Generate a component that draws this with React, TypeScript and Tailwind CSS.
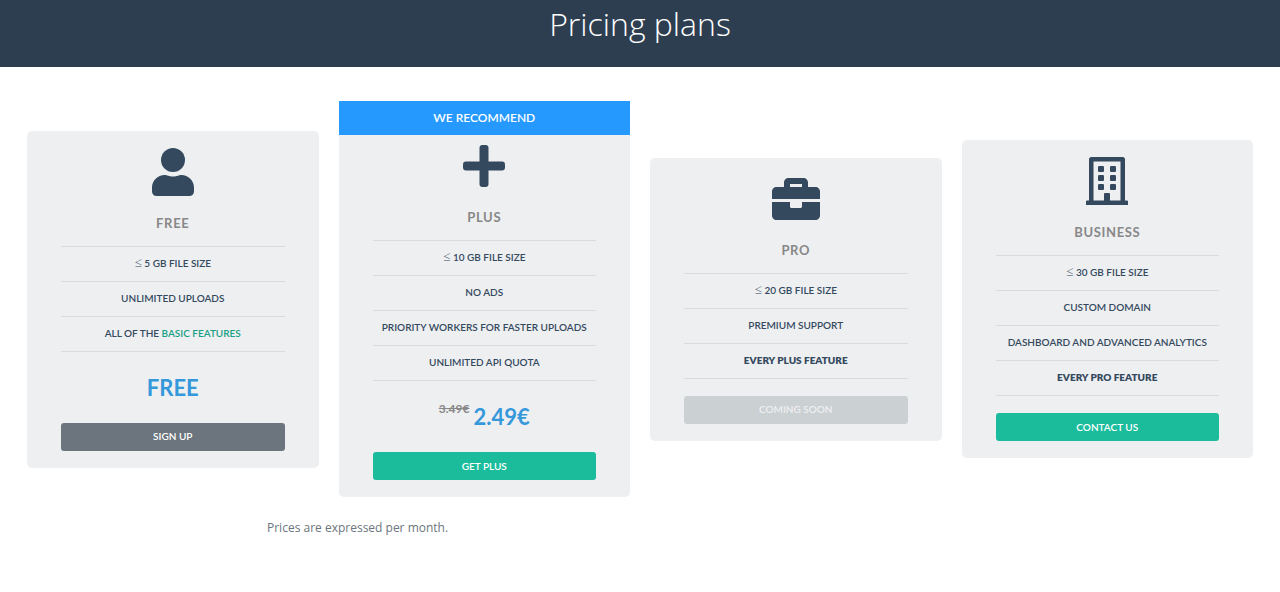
import type { ReactNode } from 'react';
import clsx from 'clsx';

interface Plan {
    name: string;
    icon: ReactNode;
    features: ReactNode[];
    recommended?: boolean;
    oldPrice?: string;
    price?: string;
    action: string;
    actionStyle: string;
    disabled?: boolean;
}

function UserIcon() {
    return (
        <svg viewBox="0 0 448 512" className="h-12" fill="currentColor" aria-hidden="true">
            <circle cx="224" cy="128" r="128" />
            <path d="M313.600 288c-28.700 0-42.500 16-89.600 16s-60.800-16-89.600-16C60.200 288 0 348.200 0 422.400V464c0 26.500 21.500 48 48 48h352c26.500 0 48-21.500 48-48v-41.600c0-74.200-60.200-134.400-134.400-134.400z" />
        </svg>
    );
}

function PlusIcon() {
    return (
        <svg viewBox="0 0 448 512" className="h-12" fill="currentColor" aria-hidden="true">
            <rect x="176" y="32" width="96" height="448" rx="32" />
            <rect x="0" y="208" width="448" height="96" rx="32" />
        </svg>
    );
}

function BriefcaseIcon() {
    return (
        <svg viewBox="0 0 512 512" className="h-12" fill="currentColor" aria-hidden="true">
            <path d="M320 336c0 8.840-7.160 16-16 16h-96c-8.840 0-16-7.160-16-16v-48H0v144c0 25.600 22.400 48 48 48h416c25.600 0 48-22.400 48-48V288H320v48zm144-208h-80V80c0-25.600-22.400-48-48-48H176c-25.600 0-48 22.400-48 48v48H48c-25.600 0-48 22.400-48 48v80h512v-80c0-25.600-22.400-48-48-48zm-144 0H192V96h128v32z" />
        </svg>
    );
}

function BuildingIcon() {
    return (
        <svg viewBox="0 0 448 512" className="h-12" fill="currentColor" aria-hidden="true">
            <path fillRule="evenodd" d="M56 0h336c13.300 0 24 10.700 24 24v440h20c6.600 0 12 5.400 12 12v36H0v-36c0-6.600 5.400-12 12-12h20V24C32 10.700 42.700 0 56 0zM80 48v415h112v-67c0-6.600 5.400-12 12-12h40c6.600 0 12 5.400 12 12v67h112V48z" />
            <rect x="128" y="96" width="64" height="64" rx="12" />
            <rect x="256" y="96" width="64" height="64" rx="12" />
            <rect x="128" y="192" width="64" height="64" rx="12" />
            <rect x="256" y="192" width="64" height="64" rx="12" />
            <rect x="128" y="288" width="64" height="64" rx="12" />
            <rect x="256" y="288" width="64" height="64" rx="12" />
        </svg>
    );
}

function FileSize({ limit }: { limit: number }) {
    return (
        <>
            <span className="font-['Open_Sans',sans-serif] text-[13px] leading-none font-light">≤</span> {limit} GB file size
        </>
    );
}

const plans: Plan[] = [
    {
        name: 'Free',
        icon: <UserIcon />,
        features: [
            <FileSize limit={5} />,
            'Unlimited uploads',
            <>All of the <a href="#features" className="text-[#18a085]">basic features</a></>,
        ],
        price: 'Free',
        action: 'Sign up',
        actionStyle: 'bg-[#6c757d] text-white',
    },
    {
        name: 'Plus',
        icon: <PlusIcon />,
        features: [<FileSize limit={10} />, 'No ads', 'Priority workers for faster uploads', 'Unlimited API quota'],
        recommended: true,
        oldPrice: '3.49€',
        price: '2.49€',
        action: 'Get Plus',
        actionStyle: 'bg-[#1abc9c] text-white',
    },
    {
        name: 'Pro',
        icon: <BriefcaseIcon />,
        features: [<FileSize limit={20} />, 'Premium support', <strong className="font-extrabold">Every Plus feature</strong>],
        action: 'Coming soon',
        actionStyle: 'bg-[#cbd0d3] text-[#eeeff1]',
        disabled: true,
    },
    {
        name: 'Business',
        icon: <BuildingIcon />,
        features: [
            <FileSize limit={30} />,
            'Custom domain',
            'Dashboard and advanced analytics',
            <strong className="font-extrabold">Every Pro feature</strong>,
        ],
        action: 'Contact us',
        actionStyle: 'bg-[#1abc9c] text-white',
    },
];

function PlanCard({ plan }: { plan: Plan }) {
    return (
        <article className={clsx('bg-[#eeeff1] text-center uppercase', plan.recommended ? 'rounded-b-[5px]' : 'rounded-[5px]')}>
            {plan.recommended && (
                <p className="h-[34px] bg-[#2699ff] text-[12px] leading-[34px] font-semibold text-white">We recommend</p>
            )}
            <div className={clsx('px-[34px] pb-[17px]', plan.recommended ? 'pt-[7px]' : 'pt-[17px]')}>
                <div className="flex justify-center text-[#34495e]">{plan.icon}</div>
                <h2 className="pt-4 pb-3 text-[13px] leading-[22px] font-bold tracking-wider text-[#888888]">{plan.name}</h2>
                <ul className="border-t border-[#d9dbdd] text-[10px] leading-[32px] font-semibold text-[#34495e]">
                    {plan.features.map((feature, i) => (
                        <li key={i} className="h-[35px] border-b border-[#d9dbdd] whitespace-nowrap">{feature}</li>
                    ))}
                </ul>
                {plan.price ? (
                    <p className="flex h-[71px] items-center justify-center gap-1 text-[22px] font-bold text-[#3498db]">
                        {plan.oldPrice && <s className="pb-4 text-[12px] text-[#888888]">{plan.oldPrice}</s>}
                        <span>{plan.price}</span>
                    </p>
                ) : (
                    <div className="h-[17px]" />
                )}
                <button
                    type="button"
                    disabled={plan.disabled}
                    className={clsx('block h-7 w-full rounded-[3px] text-[10px] font-semibold uppercase', plan.actionStyle)}
                >
                    {plan.action}
                </button>
            </div>
        </article>
    );
}

export default function App() {
    return (
        <div className="min-h-screen bg-white font-['Lato',sans-serif]">
            <header className="bg-[#2d3e50] pt-[3px] pb-[22px] text-center">
                <h1 className="font-['Open_Sans',sans-serif] text-[32px] leading-[42px] font-light text-white">Pricing plans</h1>
            </header>
            <main className="px-[27px] pt-[34px]">
                <div className="grid grid-cols-4 items-center gap-5">
                    {plans.map((plan) => (
                        <PlanCard key={plan.name} plan={plan} />
                    ))}
                </div>
                <p className="pt-5 pl-60 font-['Open_Sans',sans-serif] text-[12px] leading-[22px] text-[#6c757d]">
                    Prices are expressed per month.
                </p>
            </main>
        </div>
    );
}
